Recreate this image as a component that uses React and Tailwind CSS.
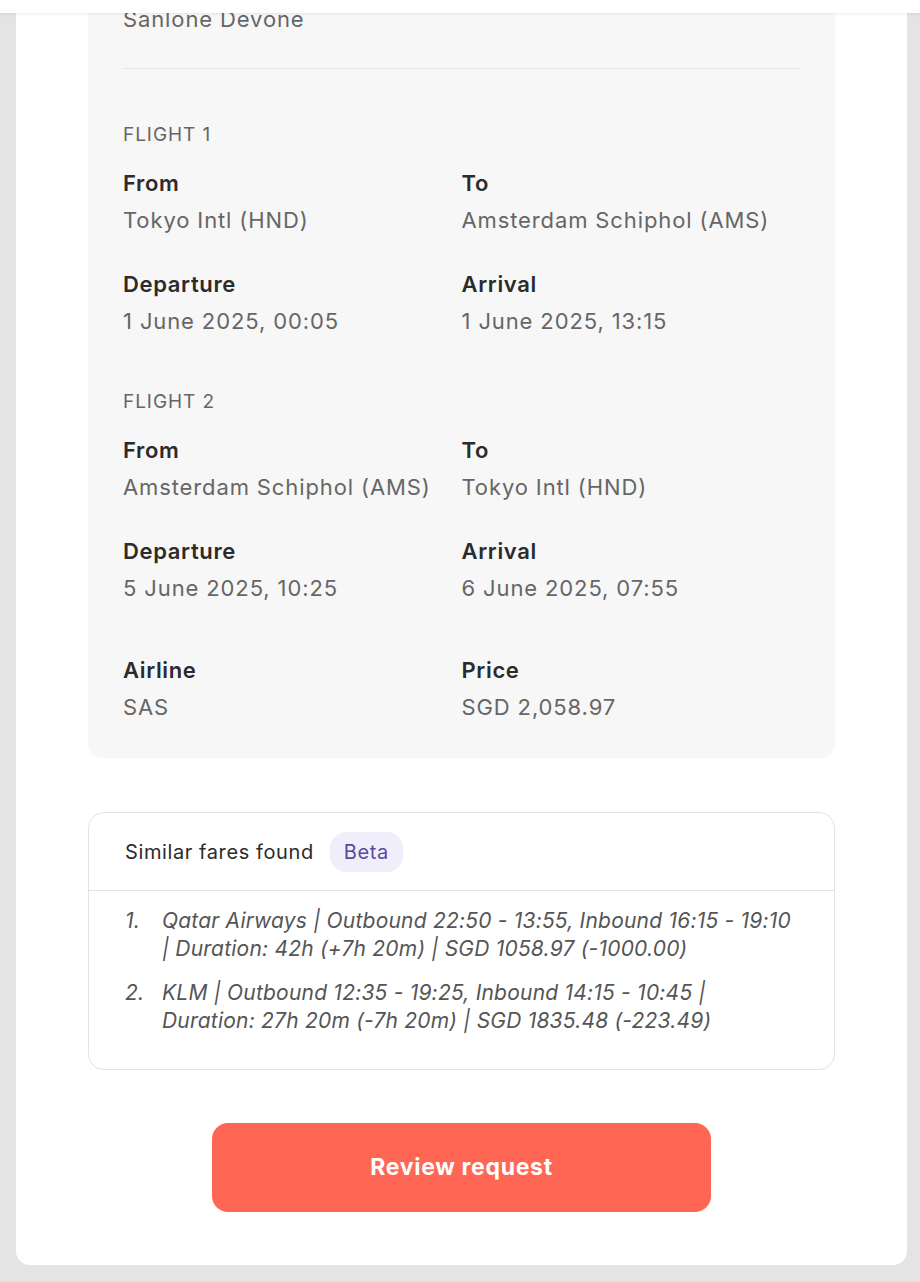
import React from 'react'

const flights = [
  {
    title: 'Flight 1',
    from: 'Tokyo Intl (HND)',
    to: 'Amsterdam Schiphol (AMS)',
    departure: '1 June 2025, 00:05',
    arrival: '1 June 2025, 13:15',
  },
  {
    title: 'Flight 2',
    from: 'Amsterdam Schiphol (AMS)',
    to: 'Tokyo Intl (HND)',
    departure: '5 June 2025, 10:25',
    arrival: '6 June 2025, 07:55',
  },
]

const fares = [
  'Qatar Airways | Outbound 22:50 - 13:55, Inbound 16:15 - 19:10 | Duration: 42h (+7h 20m) | SGD 1058.97 (-1000.00)',
  'KLM | Outbound 12:35 - 19:25, Inbound 14:15 - 10:45 | Duration: 27h 20m (-7h 20m) | SGD 1835.48 (-223.49)',
]

function Field({ label, value }) {
  return (
    <div>
      <p className="text-[22px] leading-7 tracking-[0.03em] font-semibold text-[#2b2b2b]">{label}</p>
      <p className="mt-[9px] text-[22px] leading-7 tracking-[0.04em] text-[#666666]">{value}</p>
    </div>
  )
}

function App() {
  return (
    <div className="relative min-h-screen bg-[#e4e4e4] pl-4 pr-[13px] pb-4 font-['Inter',sans-serif] overflow-hidden">
      {/* sticky header strip */}
      <div className="absolute top-0 left-0 right-0 h-[13px] bg-white shadow-[0_1px_3px_rgba(0,0,0,0.08)] z-10" />

      <div className="bg-white rounded-b-[14px] px-[72px] pb-[53px]">
        {/* Booking details */}
        <div className="bg-[#f7f7f7] rounded-b-[14px] px-[35px] pt-[5px] pb-[37px]">
          <p className="text-[22px] leading-7 tracking-[0.04em] text-[#666666]">Sanlone Devone</p>
          <div className="mt-[35px] h-px bg-[#e2e2e2]" />

          {flights.map((f, i) => (
            <div key={f.title} className={i === 0 ? 'mt-[54px]' : 'mt-[55px]'}>
              <p className="text-[19px] leading-6 uppercase tracking-[0.05em] text-[#666666]">{f.title}</p>
              <div className="mt-[22px] grid grid-cols-2">
                <Field label="From" value={f.from} />
                <Field label="To" value={f.to} />
              </div>
              <div className="mt-9 grid grid-cols-2">
                <Field label="Departure" value={f.departure} />
                <Field label="Arrival" value={f.arrival} />
              </div>
            </div>
          ))}

          <div className="mt-[54px] grid grid-cols-2">
            <Field label="Airline" value="SAS" />
            <Field label="Price" value="SGD 2,058.97" />
          </div>
        </div>

        {/* Similar fares */}
        <div className="mt-[54px] rounded-[16px] border border-[#e3e3e3] bg-white">
          <div className="flex items-center gap-4 h-[78px] px-9 border-b border-[#e3e3e3]">
            <span className="text-[20px] tracking-[0.03em] text-[#2b2b2b]">Similar fares found</span>
            <span className="h-10 px-[14px] flex items-center rounded-[16px] bg-[#f1eefb] text-[20px] tracking-[0.03em] text-[#5a4a9f]">Beta</span>
          </div>
          <ol className="pl-9 pr-[36px] pt-4 pb-[34px] flex flex-col gap-4">
            {fares.map((fare, i) => (
              <li key={i} className="flex italic text-[21px] leading-7 tracking-[0.01em] text-[#555555]">
                <span className="w-[37px] shrink-0">{i + 1}.</span>
                <span>{fare}</span>
              </li>
            ))}
          </ol>
        </div>

        {/* Action */}
        <div className="mt-[53px] flex justify-center">
          <button className="w-[499px] h-[89px] rounded-[16px] bg-[#ff6754] text-white text-[23px] tracking-[0.03em] font-bold">
            Review request
          </button>
        </div>
      </div>
    </div>
  )
}

export default App
